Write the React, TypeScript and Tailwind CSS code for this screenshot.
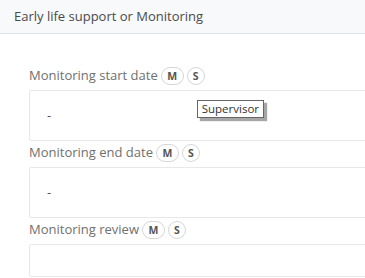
import React from "react";

function Badge({ letter, wide }: { letter: string; wide?: boolean }) {
  return (
    <span
      className={`inline-flex items-center justify-center h-[18px] ${wide ? "w-[23px]" : "w-[18px]"} rounded-full border border-[#d6d6d6] bg-white text-[10.5px] font-bold text-[#555] leading-none`}
    >
      {letter}
    </span>
  );
}

function Field({
  label,
  value,
  tooltip,
  last,
}: {
  label: string;
  value?: string;
  tooltip?: boolean;
  last?: boolean;
}) {
  return (
    <div className="relative">
      <div className="h-[24px] flex items-center gap-[3px] mb-[2px]">
        <span className="text-[13px] text-[#707070]">{label}</span>
        <Badge letter="M" wide />
        <span className="relative flex">
          <Badge letter="S" />
          {tooltip && (
            <span className="absolute left-[10px] top-[33px] z-10 whitespace-nowrap border border-[#666] bg-white px-[4px] text-[11.5px] leading-[16px] text-[#333] shadow-[3px_3px_1px_rgba(0,0,0,0.35)]">
              Supervisor
            </span>
          )}
        </span>
      </div>
      <div
        className={`${last ? "h-[33px]" : "h-[51px]"} -mr-[20px] border border-[#e8e8e8] rounded-[2px] flex items-center pl-[17px] text-[13px] text-[#555]`}
      >
        {value}
      </div>
    </div>
  );
}

export default function App() {
  return (
    <div
      className="w-[365px] h-[278px] overflow-hidden bg-white"
      style={{ fontFamily: '"Open Sans", "Noto Sans", sans-serif' }}
    >
      <div className="h-[34px] bg-[#f8f9fa] border-b border-[#dfe3e8] flex items-center pl-[14px] text-[13px] text-[#4a4a4a]">
        Early life support or Monitoring
      </div>
      <div className="pl-[29px] pt-[30px]">
        <Field label="Monitoring start date" value="-" tooltip />
        <Field label="Monitoring end date" value="-" />
        <Field label="Monitoring review" last />
      </div>
    </div>
  );
}
